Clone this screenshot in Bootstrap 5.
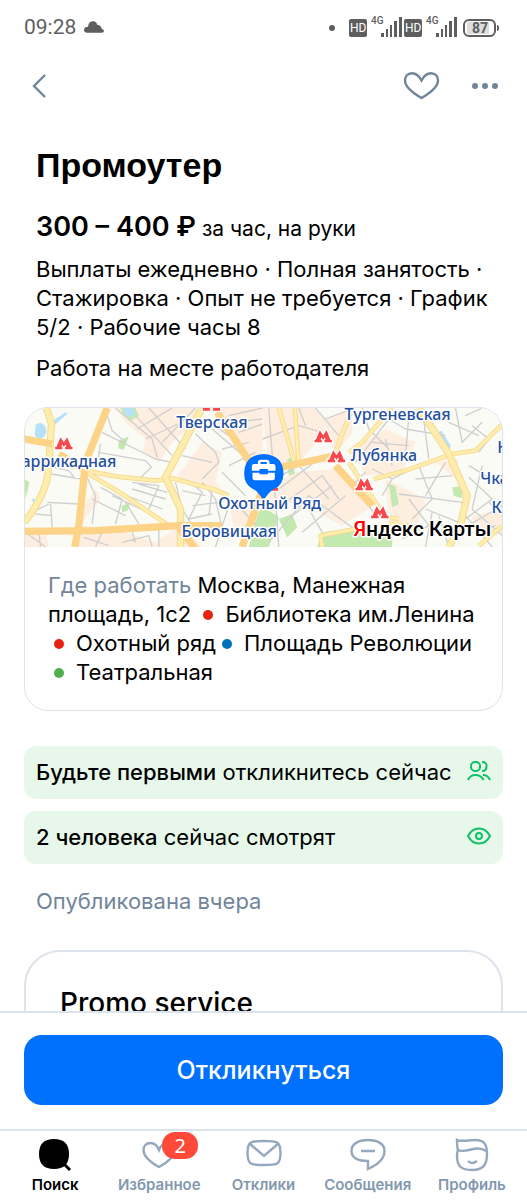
<!DOCTYPE html>
<html lang="ru">
<head>
<meta charset="utf-8">
<meta name="viewport" content="width=device-width, initial-scale=1">
<title>Промоутер</title>
<link href="https://cdn.jsdelivr.net/npm/bootstrap@5.3.0/dist/css/bootstrap.min.css" rel="stylesheet">
<style>
  :root { --slate: #70859a; --line: #dce3eb; --ok: #0dc267; }
  body { font-family: Inter, "Liberation Sans", sans-serif; font-size: 22px; line-height: 29px; color: #000; background: #fff; }
  svg { display: block; flex: none; }
  .status-bar { height: 52px; padding: 2px 28px 0 24px; font: 21px/24px Roboto, sans-serif; color: #5e5e5e; }
  .top-bar { height: 68px; padding: 0 26px 0 31px; }
  .top-actions { gap: 27px; }
  .icon-btn { border: 0; background: none; padding: 0; color: var(--slate); }
  .scroller { min-height: 0; overflow-y: auto; scrollbar-width: none; }
  .scroller::-webkit-scrollbar { display: none; }
  .inset { padding: 0 12px; }
  h1 { font: 700 34px/40px "Liberation Sans", Arial, sans-serif; margin: 25px 0 24px; }
  .pay { font-size: 21px; line-height: 36px; margin-bottom: 8px; }
  .pay strong { font-weight: 600; font-size: 27px; }
  .map-card { border: 1px solid var(--line); border-radius: 24px; overflow: hidden; margin-top: 24px; }
  .map { height: 139px; width: 100%; }
  .map text { font-family: "Noto Sans", sans-serif; font-weight: 500; font-size: 48px; fill: #1f4f9f; stroke: #fff; stroke-width: 9px; stroke-linejoin: round; paint-order: stroke; }
  .map .logo { font-size: 62px; fill: #000; font-family: Roboto, sans-serif; font-weight: 500; }
  .address { padding: 24px 23px 23px; }
  .muted { color: var(--slate); }
  .dot { display: inline-block; width: 10px; height: 10px; border-radius: 50%; margin: 0 12px 2px 6px; }
  .notices { gap: 12px; margin-top: 35px; }
  .notice { background: #e7f8ea; border-radius: 12px; padding: 12px; min-height: 52px; }
  .notice b { font-weight: 500; }
  .notice svg { color: var(--ok); margin-top: -4px; }
  .published { margin: 23px 0 34px; }
  .company-card { border: 2px solid var(--line); border-radius: 36px; padding: 34px; min-height: 180px; }
  .company { font-weight: 500; font-size: 28px; line-height: 34px; margin: 0; }
  .bottom { border-top: 2px solid var(--line); background: #fff; }
  .apply-wrap { padding-top: 22px; padding-bottom: 24px; }
  .apply, .apply:hover { background: #0070ff; border: 0; color: #fff; border-radius: 18px; height: 70px; font-weight: 500; font-size: 25px; line-height: 32px; }
  .tabs { border-top: 2px solid var(--line); height: 71px; padding: 0 3px; }
  .tabs a { flex: 1 1 0; min-width: 0; color: #8298ae; text-decoration: none; font-weight: 600; font-size: 15px; line-height: 18px; padding-top: 7px; gap: 4px; }
  .tabs a.active { color: #000; }
  .tab-icon { fill: none; stroke: #94a9be; stroke-width: 2.4; }
  .count { position: absolute; left: 20px; top: -6px; width: 36px; border-radius: 13px; background: #ff4a3a; color: #fff; font: 20px/27px "Noto Sans", sans-serif; text-align: center; }
</style>
</head>
<body>
<div class="d-flex flex-column vh-100">
  <div class="status-bar d-flex align-items-center justify-content-between flex-shrink-0">
    <div class="d-flex align-items-center gap-2">
      <span>09:28</span>
      <svg width="20" height="12" viewBox="0 0 60 34" fill="currentColor"><path d="M9 34Q0 33 0 25Q1 16 12 16Q14 0 28 0Q37 0 40 11Q50 10 53 22Q60 24 60 29Q60 34 53 34Z"/></svg>
    </div>
    <svg width="170" height="24" viewBox="0 0 170 24" fill="#5e5e5e" font-family="Roboto, sans-serif">
      <circle cx="3" cy="13" r="3"/>
      <g id="sim"><rect x="20" y="4" width="18" height="18" rx="2"/><text x="21" y="17" font-size="12" fill="#fff">HD</text>
      <text x="42" y="9" font-size="10" font-weight="500">4G</text>
      <path d="M52 18h3v4h-3zM57 14h2v8h-2zM61 10h2v12h-2zM65 6h3v16h-3zM70 2h3v20h-3z"/></g>
      <use href="#sim" x="55"/>
      <rect x="135" y="5" width="31" height="16" rx="5" fill="#fff" stroke="#5e5e5e" stroke-width="2"/>
      <path d="M138 7h22v12h-22z" fill="#ddd"/><path d="M168 10q2 0 2 3t-2 3z"/>
      <text x="143" y="18" font-size="14" font-weight="700">87</text>
    </svg>
  </div>

  <header class="top-bar d-flex align-items-center justify-content-between flex-shrink-0">
    <button class="icon-btn" type="button" aria-label="Назад"><svg width="18" height="24" viewBox="0 0 18 24" fill="none" stroke="currentColor" stroke-width="2.4"><path d="M14 1L3 12L14 23"/></svg></button>
    <div class="top-actions d-flex align-items-center">
      <button class="icon-btn" type="button" aria-label="В избранное"><svg width="42" height="28" viewBox="0 0 42 28" fill="none" stroke="currentColor" stroke-width="2.4"><path d="M21.500 8.500C19 3.500 15.500 1.200 12 1.200C7.500 1.200 5 4.500 5 8.500C5 15 12 20.500 21.500 26C31 20.500 38 15 38 8.500C38 4.500 35.500 1.200 31 1.200C27.500 1.200 24 3.500 21.500 8.500Z"/></svg></button>
      <button class="icon-btn" type="button" aria-label="Ещё"><svg width="32" height="28" viewBox="0 0 32 28" fill="currentColor"><circle cx="6" cy="14" r="3"/><circle cx="16" cy="14" r="3"/><circle cx="26" cy="14" r="3"/></svg></button>
    </div>
  </header>

  <main class="scroller flex-grow-1 px-4">
    <div class="inset">
      <h1>Промоутер</h1>
      <p class="pay"><strong>300 – 400 ₽</strong> за час, на руки</p>
      <p class="mb-2 pb-1">Выплаты ежедневно · Полная занятость · Стажировка · Опыт не требуется · График 5/2 · Рабочие часы 8</p>
      <p class="mb-0">Работа на месте работодателя</p>
    </div>

    <section class="map-card">
      <svg class="map" viewBox="27 27 1434 417" preserveAspectRatio="xMidYMid slice" role="img" aria-label="Карта">
        <rect x="27" y="27" width="1434" height="417" fill="#fafbf5"/>
        <g fill="#feeee0">
          <path d="M300 27H550L520 90L470 130L430 190L380 160L390 120L330 70ZM600 27H741V170L700 210L650 120L600 90ZM560 130L620 160L600 250L640 290L480 240ZM27 385L90 390L100 444H27ZM200 380L300 390L420 430L500 375L560 444H190ZM240 270L255 300L200 370L200 330ZM640 320L741 300V380L660 400Z"/>
          <path d="M741 27H900L940 90L860 180L760 210ZM920 60L1010 27L1010 100L960 170ZM830 220L960 210L1060 330L980 380L870 320L741 300ZM1010 150L1110 90L1200 130L1160 220L1050 230ZM1110 240L1230 300L1200 400L1120 370ZM1260 190L1330 180L1320 240ZM1370 350L1461 330V400L1380 410Z"/>
        </g>
        <g fill="#c3e9b0">
          <path d="M315 27H360L370 50L345 66L325 50ZM310 125L340 112L325 152L308 148ZM27 240L42 250L30 300ZM318 320L344 312L336 335L320 340ZM741 320L790 355L760 444H700L725 350ZM815 180L830 175L838 225L820 230ZM920 400L1040 385L1130 410V444H905ZM1120 255L1140 262L1150 315L1130 325ZM1310 265L1340 262V298L1315 290ZM790 360L830 345L845 385L815 415Z"/>
        </g>
        <g fill="#b7e0fb"><path d="M325 27H352L360 43L342 55L328 45ZM60 78Q75 65 88 80Q100 105 80 118Q55 120 58 100ZM112 65L150 40L156 44L120 76ZM1266 100L1278 95L1306 140L1300 155L1288 145ZM48 300L58 298L54 312Z"/></g>
        <g fill="none" stroke="#cfcfcf" stroke-width="4" stroke-linejoin="round">
          <path d="M268 27L290 95L330 130M260 100L420 180L470 190M248 160L390 185L408 205L370 240M255 135L245 200M300 27L410 120L425 175M360 50L470 170M400 27L510 150M365 90L470 27M390 120L520 60M440 130L540 27M540 105L600 160L610 190L560 240M500 170L590 190M570 60L640 110M620 150L700 130M590 90L741 220M640 50L741 27M650 70L741 60M670 100L741 75"/>
          <path d="M208 220L240 290L230 375M230 300L330 350M255 265L320 300L300 375M290 290L420 350M320 285L440 330M350 270L450 300M370 255L455 280M350 250L430 260L400 330M330 310L370 375M95 310L190 315M105 315L110 385M30 350L100 315M60 345L110 350M105 225L200 240M115 205L160 215L180 240M30 400L90 444M70 395L75 444M240 444L260 400L300 395M205 415L280 440M320 430L400 410L410 444M350 400L360 430M430 390V444"/>
          <path d="M480 250L500 330L530 380M520 245L560 280L520 360L590 345M560 250L600 300L620 390M500 275L570 290M530 320L610 310M500 380L600 400M590 270L580 350M640 320L600 444M610 400L700 420M650 300L741 400M620 220L690 290M640 200L720 160"/>
          <path d="M760 27L790 444M741 120L850 80L920 100M760 250L850 200L940 300M790 270L910 180M810 310L920 230L970 300M830 350L950 260M860 400L990 290M760 430L880 290L1030 400M880 330L920 400M850 27L870 80M900 27L970 110M930 60L1010 30M1040 27L1060 90L1120 150M1020 190L1120 60L1170 90M1070 130L1180 140M1110 120L1130 200M1180 50L1170 170M1170 90L1290 110M1220 27L1240 180M1320 27L1340 130L1400 70M1350 50L1400 27M1370 80L1420 120L1390 160M1300 70L1390 110"/>
          <path d="M1050 220L1010 260L1090 360M1070 210L1130 240L1100 290M1130 240L1210 200L1250 300L1190 360M1150 285L1340 310M1180 300L1240 380L1160 420M1200 240L1310 230M1230 330L1330 370M1250 340L1230 444M1270 350L1300 444M1290 190L1230 290M1360 200L1461 260M1360 235L1430 300L1350 360M1400 200L1370 330L1461 410M1340 390L1461 320M1350 350L1430 444M1420 310L1461 350M1380 400L1440 380"/>
        </g>
        <g fill="none" stroke-linejoin="round" stroke="#f6d98d" stroke-width="14">
          <path d="M210 215L300 232L420 245L470 238L590 270L640 290M205 215L320 285L460 380M790 27L840 200M838 27L850 200M1010 27L960 160M1130 27L1040 130L1000 160M1000 190L1110 355L1150 360M1075 240L1170 215L1310 165L1380 155L1461 75M1120 375L1180 380L1210 400M920 444L915 410L1020 390L1100 410M1390 440L1461 380"/>
          <path stroke="#ffedad" stroke-width="9" d="M210 215L300 232L420 245L470 238L590 270L640 290M205 215L320 285L460 380M790 27L840 200M838 27L850 200M1010 27L960 160M1130 27L1040 130L1000 160M1000 190L1110 355L1150 360M1075 240L1170 215L1310 165L1380 155L1461 75M1120 375L1180 380L1210 400M920 444L915 410L1020 390L1100 410M1390 440L1461 380"/>
          <path stroke-width="22" d="M560 27L450 235L495 330V444M1210 27L1300 165L1355 290L1335 380L1300 444M93 27L108 75L98 220Q90 290 27 370"/>
          <path stroke="#ffedad" stroke-width="16" d="M560 27L450 235L495 330V444M1210 27L1300 165L1355 290L1335 380L1300 444M93 27L108 75L98 220Q90 290 27 370"/>
        </g>
        <g fill="none" stroke="#fdd387" stroke-width="22">
          <path d="M275 27L210 190L190 380L178 444M27 120L110 135M130 165L210 215M27 397L240 395L490 380H620M490 385L540 450M605 40L710 200M741 215L830 198L980 165M960 200L1070 320M741 270L680 444"/>
        </g>
        <g fill="#f9484c" stroke="#fff" stroke-width="8" paint-order="stroke">
          <path id="metro" d="M119 151V143H123L135 115L145 130L155 115L167 143H171V151H149V144H152L150 136L145 144L140 136L138 144H141V151Z"/>
          <use href="#metro" x="443" y="-116"/><use href="#metro" x="778" y="-21"/><use href="#metro" x="818" y="39"/><use href="#metro" x="901" y="123"/><use href="#metro" x="948" y="207"/><use href="#metro" x="617" y="124"/>
        </g>
        <text x="482" y="88">Тверская</text>
        <text x="18" y="205">аррикадная</text>
        <text x="498" y="415">Боровицкая</text>
        <text x="987" y="63">Тургеневская</text>
        <text x="1006" y="185">Лубянка</text>
        <text x="1445" y="163">К</text>
        <text x="1394" y="255">Чка</text>
        <text x="1428" y="343">К</text>
        <path d="M744 165Q804 168 804 225Q803 258 776 270Q762 276 744 304Q726 276 712 270Q686 256 686 225Q686 168 744 165Z" fill="#0070ff"/>
        <path fill="#fff" fill-rule="evenodd" d="M727 195V190Q727 182 736 182H753Q762 182 762 190V195H773Q780 195 780 202V215H757V210H732V215H709V202Q709 195 716 195ZM735 195H754V189H735ZM711 221H732V226H757V221H778V238Q778 244 771 244H718Q711 244 711 238Z"/>
        <text x="608" y="331">Охотный Ряд</text>
        <text class="logo" x="1014" y="411"><tspan fill="#f00">Я</tspan>ндекс Карты</text>
      </svg>
      <div class="address"><span class="muted">Где работать</span> Москва, Манежная площадь, 1с2 <span class="text-nowrap"><i class="dot" style="background:#e42313"></i>Библиотека им.Ленина</span> <span class="text-nowrap"><i class="dot" style="background:#e42313"></i>Охотный ряд</span><span class="text-nowrap"><i class="dot" style="background:#0072ba"></i>Площадь Революции</span> <span class="text-nowrap"><i class="dot" style="background:#4fb04f"></i>Театральная</span></div>
    </section>

    <div class="notices d-flex flex-column">
      <div class="notice d-flex align-items-center justify-content-between"><span><b>Будьте первыми</b> откликнитесь сейчас</span>
        <svg width="24" height="20" viewBox="0 0 24 20" fill="none" stroke="currentColor" stroke-width="2"><rect x="4" y="1" width="9" height="9" rx="4"/><path d="M15 1Q20 1 19.500 5.500Q19.500 10 15 10M1 19Q3 14 8.500 14Q14 14 16.500 19M16 14Q21 14 23 19"/></svg>
      </div>
      <div class="notice d-flex align-items-center justify-content-between"><span><b>2 человека</b> сейчас смотрят</span>
        <svg width="24" height="18" viewBox="0 0 24 18" fill="none" stroke="currentColor" stroke-width="2"><path d="M1 9Q5 1.500 12 1.500T23 9Q19 16.500 12 16.500T1 9Z"/><circle cx="12" cy="9" r="3"/></svg>
      </div>
    </div>
    <p class="published muted inset">Опубликована вчера</p>
    <section class="company-card"><h2 class="company">Promo service</h2></section>
  </main>

  <footer class="bottom flex-shrink-0">
    <div class="px-4 apply-wrap"><button class="btn apply w-100" type="button">Откликнуться</button></div>
    <nav class="tabs d-flex" aria-label="Основная навигация">
      <a class="active d-flex flex-column align-items-center" href="#"><svg width="34" height="34" viewBox="0 0 34 34"><path d="M16 1C26 1 31 6 31 16S26 31 16 31S1 26 1 16S6 1 16 1Z"/><path d="M25 25L32 32" stroke="#000" stroke-width="3"/></svg>Поиск</a>
      <a class="d-flex flex-column align-items-center" href="#"><span class="position-relative"><svg class="tab-icon" width="34" height="34" viewBox="0 0 34 34"><path d="M17 12C15 7 12 5 8.500 5C4 5 1.500 8 1.500 12C1.500 19 8 24 17 29C26 24 32.500 19 32.500 12C32.500 8 30 5 25.500 5C22 5 19 7 17 12Z"/></svg><span class="count">2</span></span>Избранное</a>
      <a class="d-flex flex-column align-items-center" href="#"><svg class="tab-icon" width="36" height="34" viewBox="0 0 36 34"><path d="M18 3C31 3 34.500 3 34.500 15S31 27 18 27S1.500 27 1.500 15S5 3 18 3ZM3 5L18 18L33 5"/></svg>Отклики</a>
      <a class="d-flex flex-column align-items-center" href="#"><svg class="tab-icon" width="36" height="34" viewBox="0 0 36 34"><path d="M18 2C28 2 34.500 6 34.500 13C34.500 21 27 27 18 31V23C8 23 1.500 20 1.500 13C1.500 6 8 2 18 2ZM11 13H25"/></svg>Сообщения</a>
      <a class="d-flex flex-column align-items-center" href="#"><svg class="tab-icon" width="34" height="34" viewBox="0 0 34 34"><path d="M2 2C6 4 14 2 20 2C29 2 32 6 32 16C32 27 28 32 17 32C6 32 2 28 2 18C2 16 2 14 3 12C2 9 2 6 2 2ZM3 12C12 16 21 6 31 13M13 23Q17 27 22 23"/></svg>Профиль</a>
    </nav>
  </footer>
</div>
<script src="https://cdn.jsdelivr.net/npm/bootstrap@5.3.0/dist/js/bootstrap.bundle.min.js"></script>
</body>
</html>
